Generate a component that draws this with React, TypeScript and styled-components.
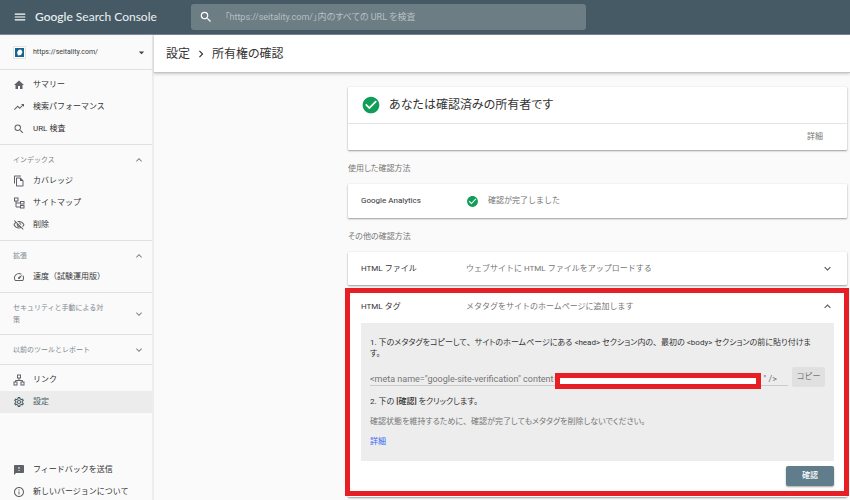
import React from "react";
import styled, { createGlobalStyle, css } from "styled-components";
import {
  MdMenu,
  MdSearch,
  MdHome,
  MdTrendingUp,
  MdOutlineFileCopy,
  MdOutlineVisibilityOff,
  MdOutlineSpeed,
  MdOutlineSettings,
  MdFeedback,
  MdInfoOutline,
  MdArrowDropDown,
  MdExpandLess,
  MdExpandMore,
  MdChevronRight,
  MdCheckCircle,
} from "react-icons/md";

const GlobalStyle = createGlobalStyle`
  * { box-sizing: border-box; }
  html, body { margin: 0; background: #fafafa; }
  body, button, input {
    font-family: Roboto, "Noto Sans CJK JP", sans-serif;
    font-size: 8px;
    line-height: 12px;
    color: #3c3c3c;
  }
  button { border: 0; background: none; padding: 0; cursor: pointer; }
  p, h1, h2 { margin: 0; font-weight: 400; }
`;

/* Proportional kana metrics, as Japanese UI fonts use. */
const proportionalKana = css`
  font-feature-settings: "palt";
`;

const Page = styled.div`
  display: flex;
  flex-direction: column;
  height: 100vh;
  overflow: hidden;
`;

/* ---------- top bar ---------- */

const TopBar = styled.header`
  display: flex;
  align-items: center;
  flex: none;
  height: 35px;
  padding: 0 12px;
  background: #455a64;
  border-bottom: 1px solid #7b8a92;
`;

const MenuButton = styled.button`
  display: flex;
  padding: 1px;
  color: #fff;
  svg { width: 14px; height: 14px; }
`;

const Brand = styled.a`
  margin-left: 7px;
  width: 156px;
  font-family: Lato, sans-serif;
  font-size: 12px;
  line-height: 18px;
  color: #eef1f2;
  text-decoration: none;
  white-space: nowrap;
  b { font-weight: 500; }
`;

const SearchBox = styled.label`
  display: flex;
  align-items: center;
  flex: 0 1 395px;
  height: 26px;
  padding: 0 8px;
  border-radius: 3px;
  background: #6c7d84;
  color: #fff;
  svg { width: 14px; height: 14px; flex: none; }
`;

const SearchInput = styled.input`
  flex: 1;
  min-width: 0;
  margin-left: 8px;
  padding: 0 4px;
  border: 0;
  outline: 0;
  background: transparent;
  font-size: 9px;
  color: #fff;
  ${proportionalKana}
  &::placeholder { color: #b6c0c4; opacity: 1; }
`;

/* ---------- sidebar ---------- */

const Body = styled.div`
  display: flex;
  flex: 1;
  min-height: 0;
`;

const Sidebar = styled.nav`
  flex: none;
  width: 154px;
  overflow: hidden;
  background: #fafafa;
  border-right: 2px solid #ededed;
`;

const SiteButton = styled.button`
  display: flex;
  align-items: center;
  width: 100%;
  height: 35px;
  padding: 0 4px 0 13px;
  border-bottom: 1px solid #e0e0e0;
  text-align: left;
  font-size: 7px;
  span { flex: 1; margin-left: 7px; }
  > svg:last-child { width: 13px; height: 13px; color: #444; }
`;

const Favicon = styled.svg`
  width: 13px;
  height: 13px;
`;

const Group = styled.section`
  padding: 4px 0;
  border-bottom: 1px solid #e0e0e0;
  &:last-of-type { border-bottom: 0; }
`;

const GroupHeader = styled.button`
  display: flex;
  align-items: center;
  justify-content: space-between;
  width: 100%;
  padding: 5px 7px 4px 13px;
  font-size: 7px;
  color: #80868b;
  text-align: left;
  span { max-width: 96px; }
  svg { width: 12px; height: 12px; flex: none; }
`;

const NavItem = styled.a<{ $active?: boolean }>`
  display: flex;
  align-items: center;
  gap: 8px;
  height: 22px;
  padding-left: 13px;
  color: #333;
  text-decoration: none;
  white-space: nowrap;
  svg { width: 12px; height: 12px; color: #5f6368; }
  ${(p) =>
    p.$active &&
    css`
      background: #ececec;
      color: #455a64;
      svg { color: #455a64; }
    `}
`;

const SidebarFooter = styled.div`
  margin-top: 42px;
`;

/* ---------- main area ---------- */

const Main = styled.main`
  flex: 1;
  min-width: 0;
`;

const Breadcrumb = styled.div`
  display: flex;
  align-items: center;
  height: 38px;
  padding-left: 12px;
  background: #fff;
  border-bottom: 1px solid #c4c4c4;
  box-shadow: 0 1px 3px rgba(0, 0, 0, 0.2);
  font-size: 12px;
  line-height: 18px;
  color: #333;
  ${proportionalKana}
  svg { width: 14px; height: 14px; margin: 0 4px; }
`;

const Crumb = styled.a`
  color: inherit;
  text-decoration: none;
`;

const Content = styled.div`
  padding: 14px 3px 0 194px;
`;

const Card = styled.section`
  position: relative;
  background: #fff;
  border-radius: 1px;
  box-shadow: 0 1px 2px rgba(0, 0, 0, 0.38), 0 0 1px rgba(0, 0, 0, 0.12);
`;

const OwnerRow = styled.div`
  display: flex;
  align-items: center;
  gap: 8px;
  height: 37px;
  padding-left: 13px;
  border-bottom: 1px solid #e4e4e4;
  svg { width: 20px; height: 20px; color: #0f9d58; }
`;

const OwnerTitle = styled.h1`
  font-size: 12px;
  line-height: 18px;
  color: #333;
  ${proportionalKana}
`;

const OwnerActions = styled.div`
  display: flex;
  justify-content: flex-end;
  padding: 7px 24px 7px 0;
`;

const TextButton = styled.button`
  color: #757575;
`;

const Caption = styled.h2`
  padding: 13px 0 9px;
  font-size: 8px;
  color: #757575;
  ${proportionalKana}
`;

const MethodRow = styled.div<{ $height: number }>`
  display: grid;
  grid-template-columns: 105px 1fr auto;
  align-items: center;
  width: 100%;
  height: ${(p) => p.$height}px;
  padding: 0 13px;
  text-align: left;
  > svg { width: 13px; height: 13px; color: #555; }
`;

const MethodName = styled.span`
  color: #333;
`;

const MethodNote = styled.span`
  display: flex;
  align-items: center;
  gap: 9px;
  color: #757575;
  svg { width: 13px; height: 13px; color: #0f9d58; }
`;

const TagCard = styled(Card)`
  margin-top: 5px;
  padding-bottom: 11px;
`;

const Highlight = styled.div`
  position: absolute;
  inset: -2px -2px 1px -3px;
  border: 5px solid #e81e25;
  pointer-events: none;
`;

const Panel = styled.div`
  margin: 0 13px 5px;
  padding: 14px 9px 13px;
  background: #ededed;
`;

const Step = styled.p`
  padding-right: 8px;
  line-height: 11px;
  color: #333;
  ${proportionalKana}
  b { font-weight: 500; }
`;

/* Keeps the full-width space after a Japanese comma. */
const Comma = styled.span`
  font-feature-settings: normal;
`;

const CodeRow = styled.div`
  display: flex;
  align-items: center;
  gap: 4px;
  margin: 8px 0 9px;
`;

const CodeField = styled.div`
  position: relative;
  flex: 1;
  min-width: 0;
`;

const CodeInput = styled.input`
  display: block;
  width: 100%;
  height: 18px;
  padding: 5px 0 0;
  border: 0;
  border-bottom: 1px solid #ccc;
  outline: 0;
  background: transparent;
  font-size: 9px;
  color: #757575;
`;

const Redaction = styled.div`
  position: absolute;
  left: 185px;
  top: 5px;
  width: 206px;
  height: 16px;
  border: 5px solid #e81e25;
  background: #fff;
`;

const CopyButton = styled.button`
  width: 33px;
  height: 20px;
  border-radius: 2px;
  background: #e0e0e0;
  color: #757575;
`;

const Note = styled.p`
  margin: 9px 0 8px;
  color: #757575;
  ${proportionalKana}
`;

const DetailLink = styled.a`
  display: block;
  color: #3367f6;
  text-decoration: none;
`;

const Actions = styled.div`
  display: flex;
  justify-content: flex-end;
  padding-right: 13px;
`;

const VerifyButton = styled.button`
  width: 48px;
  height: 20px;
  border-radius: 2px;
  background: #607d8b;
  box-shadow: 0 1px 2px rgba(0, 0, 0, 0.35);
  color: #fff;
  font-weight: 500;
`;

/* ---------- icons ---------- */

const SitemapIcon = () => (
  <svg viewBox="0 0 24 24" fill="none" stroke="currentColor" strokeWidth="2">
    <rect x="3" y="2" width="7" height="6" />
    <rect x="15" y="9" width="7" height="5" />
    <rect x="15" y="17" width="7" height="5" />
    <path d="M6 8v12h9M6 12h9" />
  </svg>
);

const LinksIcon = () => (
  <svg viewBox="0 0 24 24" fill="none" stroke="currentColor" strokeWidth="2">
    <rect x="9" y="2" width="6" height="6" />
    <rect x="2" y="16" width="6" height="6" />
    <rect x="16" y="16" width="6" height="6" />
    <path d="M12 8v5M5 16v-3h14v3" />
  </svg>
);

const SiteIcon = () => (
  <Favicon viewBox="0 0 26 26" aria-hidden="true">
    <rect x="1" y="1" width="24" height="24" fill="#fff" stroke="#e3e3e3" strokeWidth="2" />
    <rect x="4" y="4" width="18" height="18" fill="#17658f" />
    <path d="M11 8 16 7 19 12 16 18 10 19 8 13Z" fill="#fff" />
  </Favicon>
);

const metaTag =
  '<meta name="google-site-verification" content="' + "\u2003".repeat(22) + '" />';

export default function App() {
  return (
    <Page lang="ja">
      <GlobalStyle />
      <TopBar>
        <MenuButton aria-label="メニュー"><MdMenu /></MenuButton>
        <Brand href="#"><b>Google</b> Search Console</Brand>
        <SearchBox>
          <MdSearch />
          <SearchInput
            type="text"
            aria-label="URL を検査"
            placeholder="「https://seitality.com/」内のすべての URL を検査"
          />
        </SearchBox>
      </TopBar>
      <Body>
        <Sidebar>
          <SiteButton>
            <SiteIcon />
            <span>https://seitality.com/</span>
            <MdArrowDropDown />
          </SiteButton>
          <Group>
            <NavItem href="#"><MdHome />サマリー</NavItem>
            <NavItem href="#"><MdTrendingUp />検索パフォーマンス</NavItem>
            <NavItem href="#"><MdSearch />URL 検査</NavItem>
          </Group>
          <Group>
            <GroupHeader><span>インデックス</span><MdExpandLess /></GroupHeader>
            <NavItem href="#"><MdOutlineFileCopy />カバレッジ</NavItem>
            <NavItem href="#"><SitemapIcon />サイトマップ</NavItem>
            <NavItem href="#"><MdOutlineVisibilityOff />削除</NavItem>
          </Group>
          <Group>
            <GroupHeader><span>拡張</span><MdExpandLess /></GroupHeader>
            <NavItem href="#"><MdOutlineSpeed />速度（試験運用版）</NavItem>
          </Group>
          <Group>
            <GroupHeader><span>セキュリティと手動による対策</span><MdExpandMore /></GroupHeader>
          </Group>
          <Group>
            <GroupHeader><span>以前のツールとレポート</span><MdExpandMore /></GroupHeader>
          </Group>
          <Group>
            <NavItem href="#"><LinksIcon />リンク</NavItem>
            <NavItem href="#" $active aria-current="page"><MdOutlineSettings />設定</NavItem>
          </Group>
          <SidebarFooter>
            <NavItem href="#"><MdFeedback />フィードバックを送信</NavItem>
            <NavItem href="#"><MdInfoOutline />新しいバージョンについて</NavItem>
          </SidebarFooter>
        </Sidebar>
        <Main>
          <Breadcrumb>
            <Crumb href="#">設定</Crumb>
            <MdChevronRight />
            <span>所有権の確認</span>
          </Breadcrumb>
          <Content>
            <Card>
              <OwnerRow>
                <MdCheckCircle />
                <OwnerTitle>あなたは確認済みの所有者です</OwnerTitle>
              </OwnerRow>
              <OwnerActions><TextButton>詳細</TextButton></OwnerActions>
            </Card>
            <Caption>使用した確認方法</Caption>
            <Card>
              <MethodRow $height={34}>
                <MethodName>Google Analytics</MethodName>
                <MethodNote><MdCheckCircle />確認が完了しました</MethodNote>
              </MethodRow>
            </Card>
            <Caption>その他の確認方法</Caption>
            <Card>
              <MethodRow as="button" $height={33} aria-expanded={false}>
                <MethodName>HTML ファイル</MethodName>
                <MethodNote>ウェブサイトに HTML ファイルをアップロードする</MethodNote>
                <MdExpandMore />
              </MethodRow>
            </Card>
            <TagCard>
              <MethodRow as="button" $height={33} aria-expanded>
                <MethodName>HTML タグ</MethodName>
                <MethodNote>メタタグをサイトのホームページに追加します</MethodNote>
                <MdExpandLess />
              </MethodRow>
              <Panel>
                <Step>
                  1. 下のメタタグをコピーして<Comma>、</Comma>サイトのホームページにある &lt;head&gt;
                  {" "}セクション内の<Comma>、</Comma>最初の &lt;body&gt; セクションの前に貼り付けます。
                </Step>
                <CodeRow>
                  <CodeField>
                    <CodeInput readOnly aria-label="メタタグ" value={metaTag} />
                    <Redaction />
                  </CodeField>
                  <CopyButton>コピー</CopyButton>
                </CodeRow>
                <Step>2. 下の <b>[確認]</b> をクリックします。</Step>
                <Note>
                  確認状態を維持するために<Comma>、</Comma>確認が完了してもメタタグを削除しないでください。
                </Note>
                <DetailLink href="#">詳細</DetailLink>
              </Panel>
              <Actions><VerifyButton>確認</VerifyButton></Actions>
              <Highlight />
            </TagCard>
          </Content>
        </Main>
      </Body>
    </Page>
  );
}
